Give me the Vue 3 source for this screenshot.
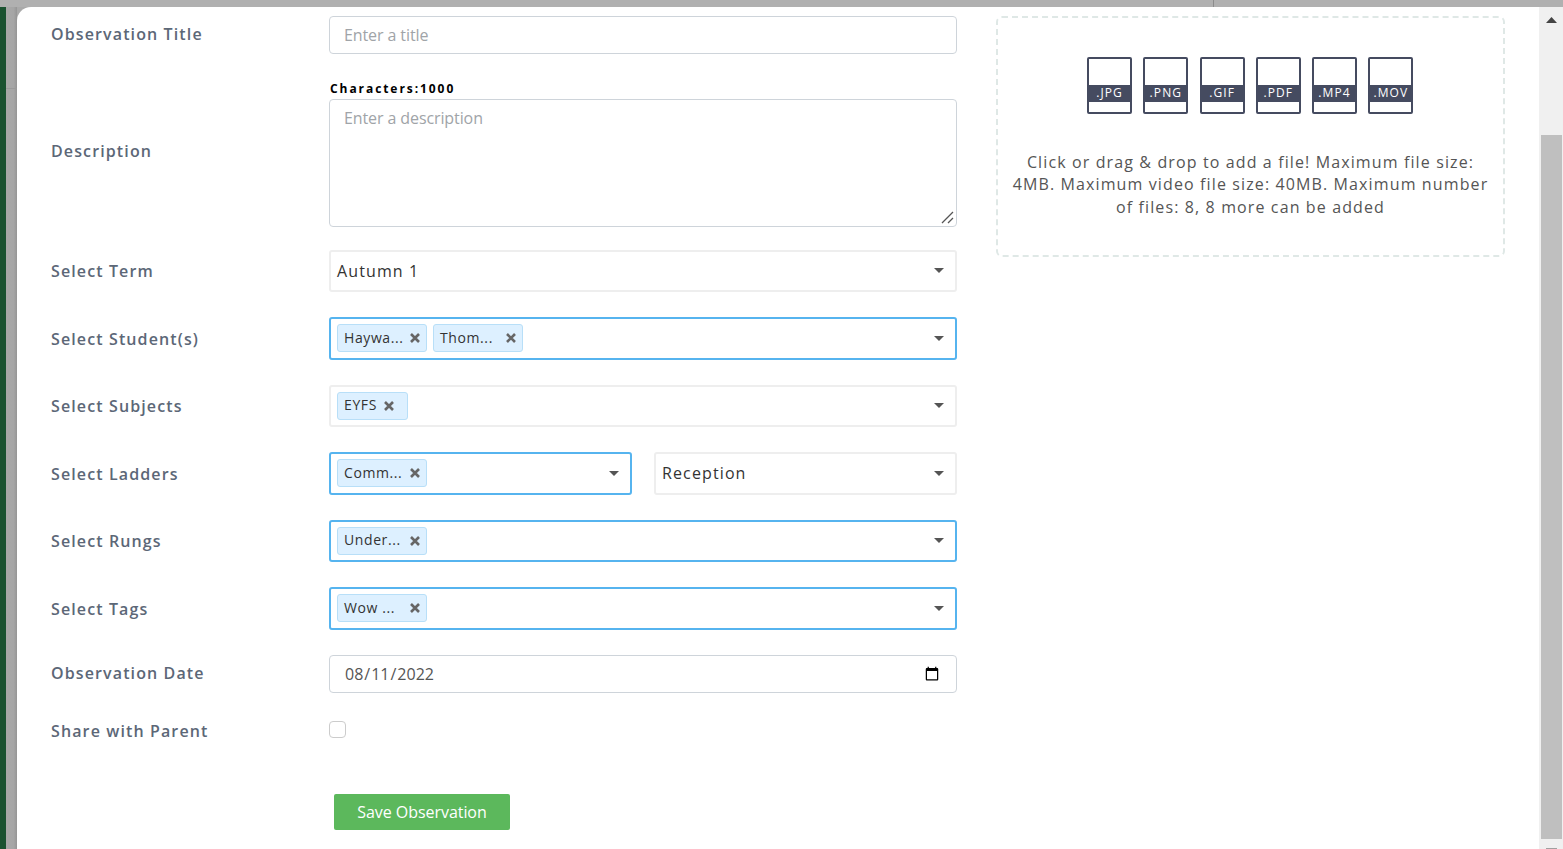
<script setup>
const fileTypes = ['.JPG', '.PNG', '.GIF', '.PDF', '.MP4', '.MOV']
</script>

<template>
  <div class="page">
    <div class="topbar"><i class="bar-line"></i></div>
    <div class="main">
      <div class="backdrop"><div class="green"></div><div class="shade"><i class="shade-line"></i></div></div>
      <div class="modal">
        <div class="form">
          <div class="row title-row">
            <label class="lbl">Observation Title</label>
            <input class="ctl" type="text" placeholder="Enter a title" />
          </div>
          <div class="row desc-row">
            <label class="lbl">Description</label>
            <div class="field">
              <div class="chars">Characters:1000</div>
              <div class="area-wrap">
                <textarea class="ctl area" placeholder="Enter a description"></textarea>
                <svg class="grip" viewBox="0 0 13 13"><path d="M1 12L12 1M7 12l5-5" /></svg>
              </div>
            </div>
          </div>
          <div class="row">
            <label class="lbl">Select Term</label>
            <div class="sel"><span class="val">Autumn 1</span><i class="caret"></i></div>
          </div>
          <div class="row">
            <label class="lbl">Select Student(s)</label>
            <div class="sel on">
              <span class="chip"><span class="chip-t">Haywa...</span><svg class="x" viewBox="0 0 10 10"><path d="M1 1l8 8M9 1l-8 8" /></svg></span>
              <span class="chip"><span class="chip-t">Thom...</span><svg class="x" viewBox="0 0 10 10"><path d="M1 1l8 8M9 1l-8 8" /></svg></span>
              <i class="caret"></i>
            </div>
          </div>
          <div class="row">
            <label class="lbl">Select Subjects</label>
            <div class="sel">
              <span class="chip short"><span class="chip-t">EYFS</span><svg class="x" viewBox="0 0 10 10"><path d="M1 1l8 8M9 1l-8 8" /></svg></span>
              <i class="caret"></i>
            </div>
          </div>
          <div class="row">
            <label class="lbl">Select Ladders</label>
            <div class="pair">
              <div class="sel on">
                <span class="chip"><span class="chip-t">Comm...</span><svg class="x" viewBox="0 0 10 10"><path d="M1 1l8 8M9 1l-8 8" /></svg></span>
                <i class="caret"></i>
              </div>
              <div class="sel"><span class="val">Reception</span><i class="caret"></i></div>
            </div>
          </div>
          <div class="row">
            <label class="lbl">Select Rungs</label>
            <div class="sel on">
              <span class="chip"><span class="chip-t">Under...</span><svg class="x" viewBox="0 0 10 10"><path d="M1 1l8 8M9 1l-8 8" /></svg></span>
              <i class="caret"></i>
            </div>
          </div>
          <div class="row">
            <label class="lbl">Select Tags</label>
            <div class="sel on">
              <span class="chip"><span class="chip-t">Wow ...</span><svg class="x" viewBox="0 0 10 10"><path d="M1 1l8 8M9 1l-8 8" /></svg></span>
              <i class="caret"></i>
            </div>
          </div>
          <div class="row date-row">
            <label class="lbl">Observation Date</label>
            <input class="ctl date" type="date" value="2022-08-11" />
          </div>
          <div class="row share-row">
            <label class="lbl">Share with Parent</label>
            <input class="check" type="checkbox" />
          </div>
          <div class="actions">
            <button class="save" type="button">Save Observation</button>
          </div>
        </div>
        <div class="drop">
          <div class="files">
            <div v-for="t in fileTypes" :key="t" class="file"><span class="band">{{ t }}</span></div>
          </div>
          <p class="hint">Click or drag &amp; drop to add a file! Maximum file size: 4MB. Maximum video file size: 40MB. Maximum number of files: 8, 8 more can be added</p>
        </div>
      </div>
      <div class="scrollbar">
        <svg class="arrow" viewBox="0 0 11 6"><path d="M5.5 0L11 6H0z" /></svg>
        <div class="thumb"></div>
        <div class="down"></div>
      </div>
    </div>
  </div>
</template>

<style>
html, body { margin: 0; height: 100%; overflow: hidden; background: #fff; }
</style>

<style scoped>
.page {
  height: 849px;
  display: flex;
  flex-direction: column;
  overflow: hidden;
  font-family: "Open Sans", sans-serif;
}
.topbar { height: 7px; background: #b0b0b0; flex: none; position: relative; }
.bar-line { position: absolute; left: 1213px; top: 0; width: 1px; height: 7px; background: #8c8c8c; }
.main { flex: 1; display: flex; min-height: 0; background: #a9a9a9; }
.backdrop { width: 17px; flex: none; display: flex; }
.green { width: 6px; background: #1a5230; }
.shade { flex: 1; position: relative; background: linear-gradient(90deg, #a8a8a8, #a6a6a6 70%, #959595); }
.shade-line { position: absolute; left: 0; right: 0; top: 81px; height: 1px; background: #9a9a9a; }
.modal {
  flex: 1;
  min-width: 0;
  background: #fff;
  border-top-left-radius: 14px;
  display: flex;
  align-items: flex-start;
  padding: 9px 0 0 34px;
  gap: 39px;
  overflow: hidden;
}
.form { width: 906px; flex: none; display: flex; flex-direction: column; gap: 25px; }
.row { display: flex; align-items: center; }
.lbl {
  width: 278px;
  flex: none;
  margin-top: 0.5px;
  font-size: 16px;
  font-weight: 600;
  letter-spacing: 1.12px;
  color: #5c6777;
  line-height: 24px;
}
.ctl {
  box-sizing: border-box;
  width: 628px;
  flex: none;
  height: 38px;
  border: 1px solid #ced4da;
  border-radius: 4px;
  padding: 6px 14px;
  font-family: "Open Sans", sans-serif;
  font-size: 16px;
  letter-spacing: -0.1px;
  color: #495057;
  background: #fff;
  outline: none;
  margin: 0;
}
.ctl::placeholder { color: #a0a4a8; opacity: 1; }
.title-row .lbl { margin: 0 0 2px; }
.desc-row { margin-top: -3px; margin-bottom: -2.5px; }
.desc-row .lbl { margin: 0 0 2px; }
.date-row .lbl { margin: 0 0 2px; }
.field { width: 628px; flex: none; }
.chars {
  font-size: 12px;
  font-weight: 700;
  letter-spacing: 1.93px;
  line-height: 25px;
  height: 23px;
  color: #000;
  padding-left: 1px;
}
.area-wrap { position: relative; height: 128px; }
.area { display: block; height: 128px; resize: none; padding-top: 7px; }
.grip {
  position: absolute;
  right: 3px;
  bottom: 3px;
  width: 13px;
  height: 13px;
}
.grip path { stroke: #555; stroke-width: 1.3; fill: none; }
.sel {
  box-sizing: border-box;
  width: 628px;
  flex: none;
  height: 42.5px;
  border: 2px solid #eeeeee;
  border-radius: 3px;
  background: #fff;
  display: flex;
  align-items: center;
  padding: 0 6px;
  gap: 6px;
  position: relative;
}
.sel.on { border-color: #56b4ef; }
.val { font-size: 16px; letter-spacing: 1.12px; color: #333; }
.caret {
  position: absolute;
  right: 11px;
  top: 50%;
  margin-top: -2.7px;
  border-style: solid;
  border-width: 5px 5px 0;
  border-color: #555 transparent transparent;
}
.chip {
  box-sizing: border-box;
  width: 90px;
  height: 28px;
  background: #ddf0ff;
  border: 1px solid #b8dff8;
  border-radius: 3px;
  display: flex;
  align-items: center;
  justify-content: space-between;
  padding: 0 6px;
  font-size: 14px;
  letter-spacing: 0.6px;
  color: #333;
}
.chip.short { width: 71px; justify-content: flex-start; gap: 7px; }
.chip-t { white-space: nowrap; margin-top: -1.6px; }
.x { width: 10px; height: 10px; flex: none; }
.x path { stroke: #666; stroke-width: 2.6; fill: none; }
.pair { width: 628px; flex: none; display: flex; gap: 22px; }
.pair .sel { width: 303px; }
.date { padding: 6px 14px; letter-spacing: 0; color: #555; }
.share-row { align-items: flex-start; }
.share-row .lbl { margin: 0; line-height: 26px; }
.check {
  appearance: none;
  width: 17px;
  height: 17px;
  margin: 3px 0 0;
  border: 1px solid #ccc;
  border-radius: 4px;
  background: #fff;
  box-sizing: border-box;
}
.actions { padding: 25.5px 0 0 283px; }
.save {
  width: 176px;
  height: 36px;
  border: none;
  border-radius: 2px;
  background: #5cb85c;
  color: #fff;
  font-family: "Open Sans", sans-serif;
  font-size: 16px;
  letter-spacing: -0.05px;
  padding: 0;
}
.drop {
  box-sizing: border-box;
  width: 509px;
  height: 241px;
  flex: none;
  border: 2px dashed #dfe8e6;
  border-radius: 6px;
  padding: 39px 14px 0;
  text-align: center;
}
.files { display: flex; justify-content: center; gap: 11.25px; padding-right: 0.6px; }
.file {
  box-sizing: border-box;
  width: 45px;
  height: 57px;
  border: 2px solid #454b60;
  border-radius: 2px;
  padding-top: 26px;
  background: #fff;
}
.band {
  display: block;
  height: 17px;
  line-height: 15px;
  background: #454b60;
  color: #fff;
  font-size: 12px;
  letter-spacing: 1.1px;
  text-align: center;
  white-space: nowrap;
}
.hint {
  margin: 36.7px 0 0;
  font-size: 16px;
  line-height: 22.5px;
  letter-spacing: 1.12px;
  color: #555;
}
.scrollbar {
  box-sizing: border-box;
  width: 24px;
  flex: none;
  padding-left: 1px;
  background: #f0f0f0;
  display: flex;
  flex-direction: column;
  align-items: center;
}
.arrow { width: 11px; height: 6px; margin-top: 10px; fill: #444; flex: none; }
.thumb { width: 21px; height: 704px; margin-top: 112px; background: #bfbfbf; flex: none; }
.down { width: 11px; height: 1px; margin-top: 9px; background: #a0a0a0; flex: none; }
</style>
